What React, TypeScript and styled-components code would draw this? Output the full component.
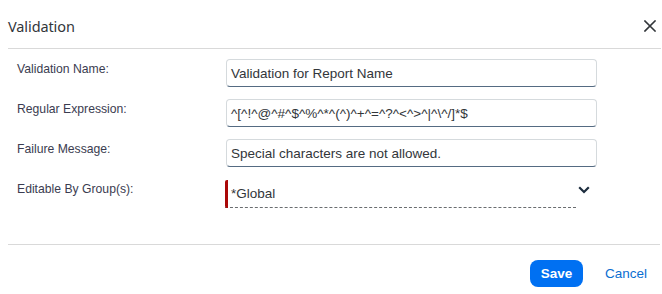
import React from "react";
import styled, { createGlobalStyle } from "styled-components";

const Global = createGlobalStyle`
  html, body { margin: 0; padding: 0; background: #ffffff; }
  body { font-family: "Liberation Sans", Arial, sans-serif; color: #32363a; }
`;

const Dialog = styled.div`
  width: 662px;
  height: 294px;
  display: flex;
  flex-direction: column;
  background: #ffffff;
`;

const Header = styled.div`
  height: 48px;
  margin-left: 8px;
  margin-right: 1px;
  border-bottom: 1px solid #d9d9d9;
  display: flex;
  align-items: center;
  justify-content: space-between;
`;

const Title = styled.h1`
  margin: 0;
  padding-top: 3px;
  font-family: "Noto Sans", "Liberation Sans", sans-serif;
  font-weight: 400;
  font-size: 14.5px;
  letter-spacing: -0.1px;
  color: #32363a;
`;

const CloseButton = styled.button`
  border: none;
  background: none;
  padding: 0;
  margin: 3px 4px 0 0;
  width: 14px;
  height: 14px;
  display: flex;
  align-items: center;
  justify-content: center;
  cursor: pointer;
`;

const Form = styled.div`
  display: grid;
  grid-template-columns: 209px 371px;
  row-gap: 12px;
  padding: 10px 0 0 17px;
  height: 185px;
  align-content: start;
`;

const Label = styled.label`
  font-family: "Liberation Sans", Arial, sans-serif;
  font-size: 12.2px;
  line-height: 16px;
  color: #3b3c50;
  padding-top: 2px;
`;

const Input = styled.div`
  box-sizing: border-box;
  height: 28px;
  border: 1px solid #d5dadd;
  border-bottom: 1px solid #556b82;
  border-radius: 4px;
  padding: 0 4px;
  display: flex;
  align-items: center;
  font-size: 13.5px;
  color: #32363a;
  white-space: nowrap;
`;

const SelectRow = styled.div`
  display: flex;
  align-items: flex-start;
  margin-left: -1px;
  margin-top: 1px;
`;

const Select = styled.div`
  box-sizing: border-box;
  width: 351px;
  height: 28px;
  position: relative;
  border-bottom: 1px dashed #6a6d70;
  padding-left: 6px;
  display: flex;
  align-items: center;
  font-size: 13.5px;
  color: #32363a;
  &::before {
    content: "";
    position: absolute;
    left: 0;
    top: 0;
    bottom: -1px;
    width: 3px;
    background: #aa0808;
    border-radius: 2px 0 0 2px;
  }
`;

const Chevron = styled.span`
  margin: 5px 0 0 1px;
  width: 14px;
  height: 10px;
  display: flex;
  align-items: center;
  justify-content: center;
`;

const Footer = styled.div`
  margin-left: 8px;
  margin-right: 2px;
  border-top: 1px solid #d9d9d9;
  display: flex;
  justify-content: flex-end;
  align-items: center;
  padding-top: 15px;
  gap: 8px;
`;

const PrimaryButton = styled.button`
  box-sizing: border-box;
  width: 53px;
  height: 27px;
  border: none;
  border-radius: 8px;
  background: #0070f2;
  color: #ffffff;
  font-family: "Liberation Sans", Arial, sans-serif;
  font-weight: 700;
  font-size: 13.5px;
  cursor: pointer;
`;

const TextButton = styled.button`
  height: 27px;
  border: none;
  background: none;
  padding: 0 13px 0 14px;
  color: #0a6ed1;
  font-family: "Liberation Sans", Arial, sans-serif;
  font-size: 13.5px;
  cursor: pointer;
`;

const fields = [
  { label: "Validation Name:", value: "Validation for Report Name" },
  { label: "Regular Expression:", value: "^[^!^@^#^$^%^*^(^)^+^=^?^<^>^|^\\^/]*$" },
  { label: "Failure Message:", value: "Special characters are not allowed." },
];

export default function App() {
  return (
    <>
      <Global />
      <Dialog>
        <Header>
          <Title>Validation</Title>
          <CloseButton aria-label="Close">
            <svg width="12" height="12" viewBox="0 0 12 12">
              <path d="M1 1L11 11M11 1L1 11" stroke="#32363a" strokeWidth="1.6" strokeLinecap="square" />
            </svg>
          </CloseButton>
        </Header>
        <Form>
          {fields.map((f) => (
            <React.Fragment key={f.label}>
              <Label>{f.label}</Label>
              <Input>{f.value}</Input>
            </React.Fragment>
          ))}
          <Label>Editable By Group(s):</Label>
          <SelectRow>
            <Select>*Global</Select>
            <Chevron>
              <svg width="12" height="8" viewBox="0 0 12 8">
                <path d="M1.2 1.2L6 6L10.8 1.2" stroke="#1d2d3e" strokeWidth="2.2" fill="none" />
              </svg>
            </Chevron>
          </SelectRow>
        </Form>
        <Footer>
          <PrimaryButton>Save</PrimaryButton>
          <TextButton>Cancel</TextButton>
        </Footer>
      </Dialog>
    </>
  );
}
